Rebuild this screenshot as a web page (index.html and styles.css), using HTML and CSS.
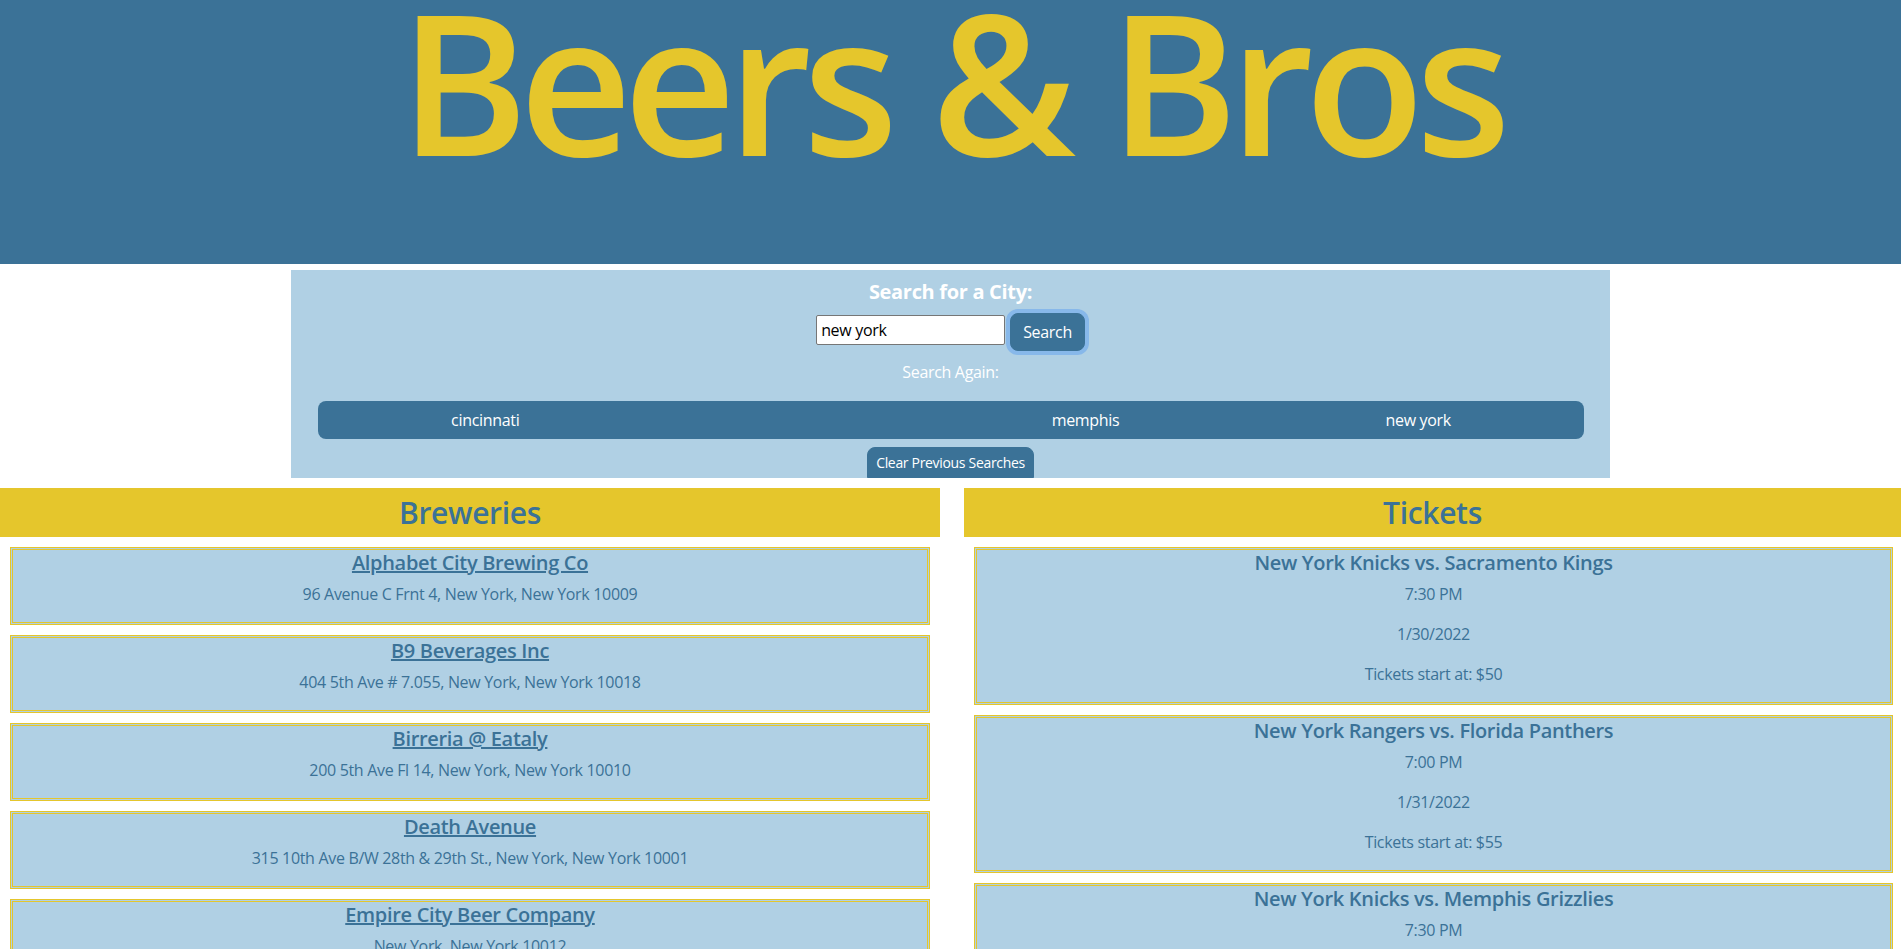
FILE: index.html
```html
<!DOCTYPE html>
<html lang="en">
<head>
<meta charset="utf-8">
<title>Beers &amp; Bros</title>
<link rel="stylesheet" href="styles.css">
</head>
<body>
<header class="site-header">
  <h1 class="site-title">Beers &amp; Bros</h1>
</header>

<section class="search-panel">
  <h3 class="search-label">Search for a City:</h3>
  <div class="search-row">
    <input class="search-input" type="text" value="new york">
    <button class="btn btn-search">Search</button>
  </div>
  <p class="again-label">Search Again:</p>
  <div class="history-bar">
    <span class="history-item">cincinnati</span>
    <span class="history-item"></span>
    <span class="history-item">memphis</span>
    <span class="history-item">new york</span>
  </div>
  <button class="btn btn-clear">Clear Previous Searches</button>
</section>

<main class="results">
  <section class="column column-left">
    <h2 class="column-title">Breweries</h2>
    <div class="card">
      <h3 class="card-title"><a href="#" class="card-link">Alphabet City Brewing Co</a></h3>
      <p class="card-line">96 Avenue C Frnt 4, New York, New York 10009</p>
    </div>
    <div class="card">
      <h3 class="card-title"><a href="#" class="card-link">B9 Beverages Inc</a></h3>
      <p class="card-line">404 5th Ave # 7.055, New York, New York 10018</p>
    </div>
    <div class="card">
      <h3 class="card-title"><a href="#" class="card-link">Birreria @ Eataly</a></h3>
      <p class="card-line">200 5th Ave Fl 14, New York, New York 10010</p>
    </div>
    <div class="card">
      <h3 class="card-title"><a href="#" class="card-link">Death Avenue</a></h3>
      <p class="card-line">315 10th Ave B/W 28th &amp; 29th St., New York, New York 10001</p>
    </div>
    <div class="card">
      <h3 class="card-title"><a href="#" class="card-link">Empire City Beer Company</a></h3>
      <p class="card-line">New York, New York 10012</p>
    </div>
  </section>

  <section class="column column-right">
    <h2 class="column-title">Tickets</h2>
    <div class="card">
      <h3 class="card-title">New York Knicks vs. Sacramento Kings</h3>
      <p class="card-line">7:30 PM</p>
      <p class="card-line">1/30/2022</p>
      <p class="card-line">Tickets start at: $50</p>
    </div>
    <div class="card">
      <h3 class="card-title">New York Rangers vs. Florida Panthers</h3>
      <p class="card-line">7:00 PM</p>
      <p class="card-line">1/31/2022</p>
      <p class="card-line">Tickets start at: $55</p>
    </div>
    <div class="card">
      <h3 class="card-title">New York Knicks vs. Memphis Grizzlies</h3>
      <p class="card-line">7:30 PM</p>
      <p class="card-line">2/1/2022</p>
      <p class="card-line">Tickets start at: $45</p>
    </div>
  </section>
</main>
</body>
</html>
```

FILE: styles.css
```css
* {
  box-sizing: border-box;
}

body {
  margin: 0;
  font-family: "Open Sans", "Noto Sans", sans-serif;
  letter-spacing: -0.02em;
  color: #3b7297;
  background: #ffffff;
}

.site-header {
  height: 264px;
  background: #3b7297;
  text-align: center;
}

.site-title {
  margin: 0;
  font-size: 196px;
  line-height: 160px;
  font-weight: 600;
  letter-spacing: -9px;
  color: #e5c62c;
}

.search-panel {
  width: 1319px;
  margin: 6px auto 0;
  padding: 10px 0 0;
  background: #b0d0e4;
  display: flex;
  flex-direction: column;
  align-items: center;
}

.search-label {
  margin: 0;
  font-size: 20px;
  line-height: 24px;
  font-weight: 700;
  color: #ffffff;
}

.search-row {
  margin-top: 9px;
  display: flex;
  align-items: flex-start;
  gap: 5px;
}

.search-input {
  width: 189px;
  height: 30px;
  margin-top: 2px;
  padding: 1px 4px;
  border: 1px solid #767676;
  border-radius: 2px;
  font-family: inherit;
  letter-spacing: inherit;
  font-size: 16px;
  color: #000000;
  background: #ffffff;
}

.btn {
  border: 1px solid #3b7297;
  background: #3b7297;
  color: #ffffff;
  font-family: inherit;
  letter-spacing: inherit;
  line-height: 1.5;
  border-radius: 8px;
}

.btn-search {
  padding: 6px 12px;
  font-size: 16px;
  box-shadow: 0 0 0 4px rgba(13, 110, 253, 0.25);
}

.again-label {
  margin: 10px 0 0;
  font-size: 16px;
  line-height: 22px;
  color: #ffffff;
}

.history-bar {
  align-self: stretch;
  margin: 18px 26px 0 27px;
  height: 38px;
  background: #3b7297;
  border-radius: 8px;
  display: flex;
  align-items: center;
  justify-content: space-around;
}

.history-item {
  font-size: 16px;
  line-height: 22px;
  color: #ffffff;
}

.btn-clear {
  margin-top: 8px;
  padding: 4px 8px;
  font-size: 14px;
  border-radius: 8px 8px 0 0;
}

.results {
  margin-top: 10px;
  display: grid;
  grid-template-columns: 940px 1fr;
  column-gap: 24px;
  align-items: start;
}

.column-title {
  margin: 0 0 10px;
  height: 49px;
  background: #e5c62c;
  color: #3b7297;
  text-align: center;
  font-size: 30px;
  line-height: 49px;
  font-weight: 600;
}

.column-left .card {
  margin: 0 10px 10px;
}

.column-right .card {
  margin: 0 8px 10px 10px;
}

.card {
  background: #b0d0e4;
  border: 3px double #e5c62c;
  text-align: center;
  padding: 0 0 17px;
}

.card-title {
  margin: 0;
  font-size: 20px;
  line-height: 26px;
  font-weight: 600;
  color: #3b7297;
}

.card-link {
  color: #3b7297;
  text-decoration: underline;
}

.card-line {
  margin: 18px 0 0;
  font-size: 16px;
  line-height: 22px;
  color: #3b7297;
}

.card-title + .card-line {
  margin-top: 7px;
}
```
